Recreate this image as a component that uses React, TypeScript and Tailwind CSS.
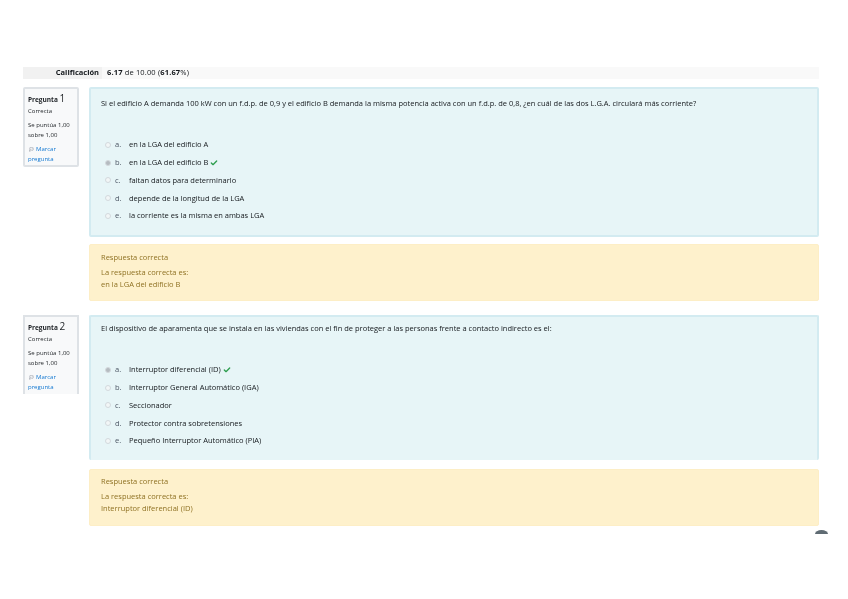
import { Check, Flag } from 'lucide-react';

interface Option {
  letter: string;
  text: string;
  selected?: boolean;
}

interface QuestionProps {
  num: number;
  text: string;
  options: Option[];
  answer: string;
  infoClass: string;
  contentClass: string;
  textClass: string;
  feedbackClass: string;
  feedbackTitleClass: string;
}

const q1: Option[] = [
  { letter: 'a.', text: 'en la LGA del edificio A' },
  { letter: 'b.', text: 'en la LGA del edificio B', selected: true },
  { letter: 'c.', text: 'faltan datos para determinarlo' },
  { letter: 'd.', text: 'depende de la longitud de la LGA' },
  { letter: 'e.', text: 'la corriente es la misma en ambas LGA' },
];

const q2: Option[] = [
  { letter: 'a.', text: 'Interruptor diferencial (ID)', selected: true },
  { letter: 'b.', text: 'Interruptor General Automático (IGA)' },
  { letter: 'c.', text: 'Seccionador' },
  { letter: 'd.', text: 'Protector contra sobretensiones' },
  { letter: 'e.', text: 'Pequeño Interruptor Automático (PIA)' },
];

function Question({ num, text, options, answer, infoClass, contentClass, textClass, feedbackClass, feedbackTitleClass }: QuestionProps) {
  return (
    <div className="flex gap-[10px]">
      <div className={`w-[56px] shrink-0 self-start bg-[#f8f9fa] border-2 border-[#dee2e6] px-[3px] pt-[3px] text-[6px] leading-[10px] text-[#1d2125] ${infoClass}`}>
        <div className="h-[12px] text-[6.5px] font-bold leading-[12px] whitespace-nowrap">
          Pregunta <span className="text-[10px] font-normal">{num}</span>
        </div>
        <div className="mt-[2px]">Correcta</div>
        <div className="mt-[4px] whitespace-nowrap">Se puntúa 1,00</div>
        <div>sobre 1,00</div>
        <div className="mt-[4px] flex items-center text-[#1177d1]">
          <Flag size={5} className="ml-[1px] text-[#6b7280]" />
          <span className="ml-[2px]">Marcar</span>
        </div>
        <div className="text-[#1177d1]">pregunta</div>
      </div>
      <div className="flex-1 flex flex-col">
        <div className={`bg-[#e7f5f7] border-2 border-[#d3ebf1] rounded-[2px] px-[10px] text-[7.5px] text-[#14181c] ${contentClass}`}>
          <div className={`leading-[11px] whitespace-nowrap ${textClass}`}>{text}</div>
          <div className="mt-[27px] flex flex-col">
            {options.map((o) => (
              <div key={o.letter} className="flex h-[17.8px] items-center">
                <span className={`ml-[4px] h-[6px] w-[6px] shrink-0 rounded-full border border-[#d3d9dd] ${o.selected ? 'bg-[#b5bbc0]' : 'bg-[#f2f6f7]'}`} />
                <span className="ml-[4px] w-[14px] shrink-0 text-[#4b5563]">{o.letter}</span>
                <span className="whitespace-nowrap">{o.text}</span>
                {o.selected && <Check size={8} strokeWidth={4} className="ml-[2px] text-[#2e9e4f]" />}
              </div>
            ))}
          </div>
        </div>
        <div className={`bg-[#fef1cc] rounded-[2px] border border-[#fdeec6] px-[11px] text-[7.5px] text-[#8f7224] ${feedbackClass}`}>
          <div className={`leading-[11px] ${feedbackTitleClass}`}>Respuesta correcta</div>
          <div className="mt-[4px] leading-[11.5px]">La respuesta correcta es:</div>
          <div className="leading-[11.5px]">{answer}</div>
        </div>
      </div>
    </div>
  );
}

export default function App() {
  return (
    <div className="relative h-[599px] w-[848px] overflow-hidden bg-white font-['Open_Sans',sans-serif] blur-[0.45px]">
      <div className="flex flex-col pl-[23px] pr-[29px] pt-[67px]">
        <div className="flex h-[12px] items-center bg-[#f9f9f9] text-[7.5px] leading-[10px] text-[#14181c]">
          <div className="flex h-full w-[79px] items-center justify-end bg-[#f1f1f1] pr-[3px] pb-[2px] font-bold">Calificación</div>
          <div className="ml-[5px] pb-[2px] tracking-[0.02em]">
            <span className="font-bold">6.17</span> de 10.00 (<span className="font-bold">61.67</span>%)
          </div>
        </div>
        <div className="mt-[8px]">
          <Question
            num={1}
            text="Si el edificio A demanda 100 kW con un f.d.p. de 0,9 y el edificio B demanda la misma potencia activa con un f.d.p. de 0,8, ¿en cuál de las dos L.G.A. circulará más corriente?"
            options={q1}
            answer="en la LGA del edificio B"
            infoClass="h-[80px] rounded-[2px]"
            contentClass="h-[150px]"
            textClass="pt-[9px]"
            feedbackClass="mt-[7px] h-[57px]"
            feedbackTitleClass="pt-[7px]"
          />
        </div>
        <div className="mt-[14px]">
          <Question
            num={2}
            text="El dispositivo de aparamenta que se instala en las viviendas con el fin de proteger a las personas frente a contacto indirecto es el:"
            options={q2}
            answer="Interruptor diferencial (ID)"
            infoClass="h-[79px] border-b-0"
            contentClass="h-[145px] border-b-0"
            textClass="pt-[6px]"
            feedbackClass="mt-[9px] h-[57px]"
            feedbackTitleClass="pt-[6px]"
          />
        </div>
      </div>
      {/* cut off back-to-top button */}
      <div className="absolute left-[815px] top-[530px] h-[4px] w-[13px] rounded-t-[50%_100%] bg-[#5f6b73]" />
    </div>
  );
}
